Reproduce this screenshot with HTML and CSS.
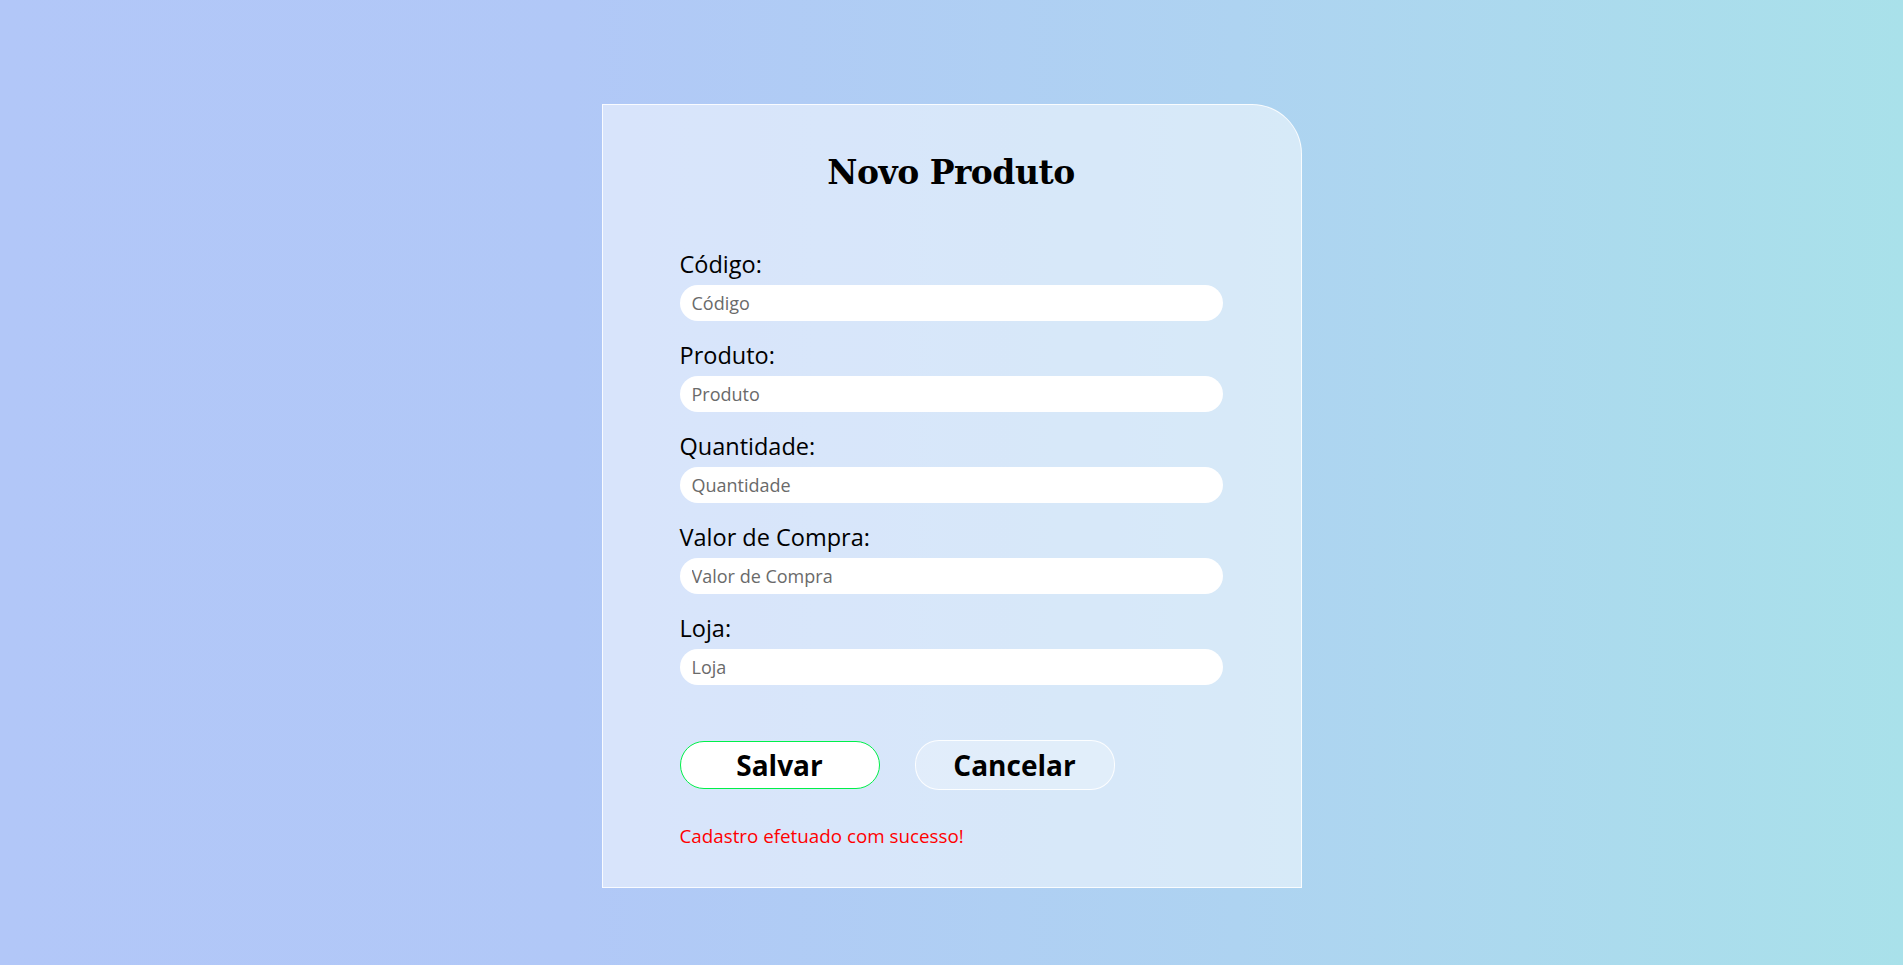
FILE: index.html
```html
<!DOCTYPE html>
<html lang="pt-BR">
<head>
<meta charset="utf-8">
<title>Novo Produto</title>
<link rel="stylesheet" href="styles.css">
</head>
<body>
<main class="page">
  <section class="card">
    <h1 class="title">Novo Produto</h1>
    <form class="form">
      <div class="field">
        <label class="label" for="codigo">Código:</label>
        <input class="input" id="codigo" type="text" placeholder="Código">
      </div>
      <div class="field">
        <label class="label" for="produto">Produto:</label>
        <input class="input" id="produto" type="text" placeholder="Produto">
      </div>
      <div class="field">
        <label class="label" for="quantidade">Quantidade:</label>
        <input class="input" id="quantidade" type="text" placeholder="Quantidade">
      </div>
      <div class="field">
        <label class="label" for="valor">Valor de Compra:</label>
        <input class="input" id="valor" type="text" placeholder="Valor de Compra">
      </div>
      <div class="field">
        <label class="label" for="loja">Loja:</label>
        <input class="input" id="loja" type="text" placeholder="Loja">
      </div>
      <div class="actions">
        <button type="button" class="btn btn-save">Salvar</button>
        <button type="button" class="btn btn-cancel">Cancelar</button>
      </div>
      <p class="message">Cadastro efetuado com sucesso!</p>
    </form>
  </section>
</main>
</body>
</html>
```
FILE: styles.css
```css
* { box-sizing: border-box; }
html, body { margin: 0; padding: 0; height: 100%; }
body {
  background: linear-gradient(90deg, #b2c7f8 0%, #b1c8f7 30%, #aed3f1 65%, #a9e1ea 100%);
  font-family: "Open Sans", "Noto Sans", sans-serif;
  color: #000;
}
.page {
  display: flex;
  justify-content: center;
  padding-top: 104px;
}
.card {
  width: 700px;
  height: 784px;
  background: rgba(255, 255, 255, 0.5);
  border: 1px solid rgba(255, 255, 255, 0.85);
  border-top-right-radius: 50px;
  padding: 0 78px 0 77px;
}
.title {
  margin: 0;
  padding-top: 48px;
  text-align: center;
  font-family: "DejaVu Serif", "Liberation Serif", serif;
  font-weight: bold;
  font-size: 33px;
  line-height: 40px;
  letter-spacing: -0.5px;
}
.form {
  display: flex;
  flex-direction: column;
  margin-top: 57px;
}
.field {
  display: flex;
  flex-direction: column;
  margin-bottom: 20px;
}
.label {
  font-size: 23.5px;
  font-weight: 500;
  line-height: 28px;
  margin-bottom: 7px;
}
.input {
  height: 36px;
  border: none;
  border-radius: 18px;
  background: #fff;
  padding: 0 12px;
  font-family: "Open Sans", "Noto Sans", sans-serif;
  font-weight: 400;
  font-size: 18px;
  outline: none;
}
.input::placeholder { color: #6a6a6a; }
.actions {
  display: flex;
  gap: 35px;
  margin-top: 35px;
  align-items: center;
}
.btn {
  width: 200px;
  height: 48px;
  border-radius: 24px;
  font-family: "Open Sans", "Noto Sans", sans-serif;
  font-weight: bold;
  font-size: 28px;
  color: #000;
  cursor: pointer;
  padding: 0;
}
.btn-save {
  background: #fff;
  border: 1px solid #00f04a;
}
.btn-cancel {
  height: 50px;
  background: rgba(255, 255, 255, 0.25);
  border: 1px solid rgba(255, 255, 255, 0.9);
}
.message {
  margin: 33px 0 0;
  color: #ff0000;
  font-weight: 400;
  font-size: 18.8px;
  line-height: 26px;
}
```
